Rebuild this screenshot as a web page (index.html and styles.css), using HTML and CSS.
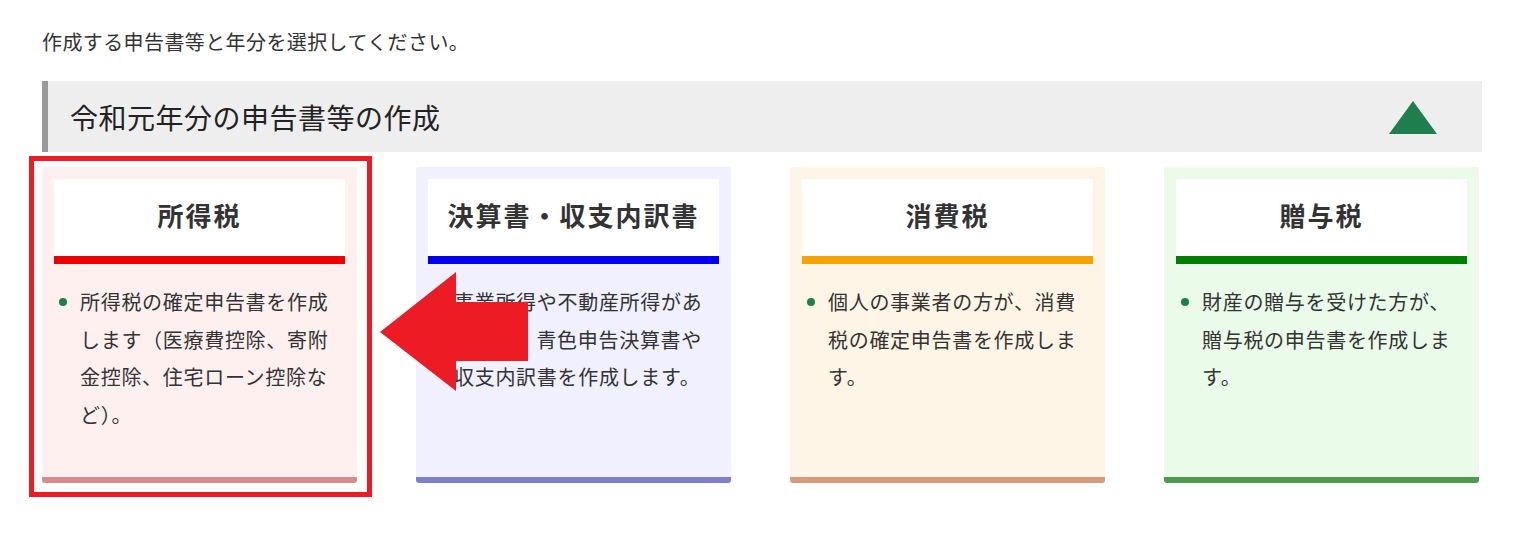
FILE: index.html
```html
<!DOCTYPE html>
<html lang="ja">
<head>
<meta charset="utf-8">
<title>申告書等の作成</title>
<link rel="stylesheet" href="styles.css">
</head>
<body>
<div class="page">
  <p class="intro">作成する申告書等と年分を選択してください。</p>
  <div class="band">
    <h2 class="band-title">令和元年分の申告書等の作成</h2>
    <svg class="band-toggle" width="48" height="33" viewBox="0 0 48 33"><polygon points="24,0 48,33 0,33" fill="#1e7e4e"/></svg>
  </div>
  <div class="cards-wrap">
    <div class="cards">
      <div class="card card-income">
        <div class="card-head"><h3>所得税</h3></div>
        <ul class="card-body"><li>所得税の確定申告書を作成します（医療費控除、寄附金控除、住宅ローン控除など）。</li></ul>
      </div>
      <div class="card card-settle">
        <div class="card-head"><h3>決算書・収支内訳書</h3></div>
        <ul class="card-body"><li>事業所得や不動産所得がある方が、青色申告決算書や収支内訳書を作成します。</li></ul>
      </div>
      <div class="card card-consume">
        <div class="card-head"><h3>消費税</h3></div>
        <ul class="card-body"><li>個人の事業者の方が、消費税の確定申告書を作成します。</li></ul>
      </div>
      <div class="card card-gift">
        <div class="card-head"><h3>贈与税</h3></div>
        <ul class="card-body"><li>財産の贈与を受けた方が、贈与税の申告書を作成します。</li></ul>
      </div>
    </div>
    <div class="highlight"></div>
    <svg class="arrow" width="148" height="119" viewBox="0 0 148 119"><polygon points="0,60 76,0 76,30 148,30 148,89 76,89 76,119" fill="#ed1c24"/></svg>
  </div>
</div>
</body>
</html>
```

FILE: styles.css
```css
* { box-sizing: border-box; }
html, body { margin: 0; padding: 0; background: #fff; }
body {
  min-height: 537px;
  font-family: "Noto Sans CJK JP", "Noto Sans", sans-serif;
  color: #333;
}
.page {
  width: 1524px;
  min-height: 537px;
  padding: 27px 42px 40px 42px;
}
.intro {
  margin: 0;
  font-size: 20px;
  line-height: 30px;
  letter-spacing: 0.4px;
  color: #333;
}
.band {
  margin-top: 24px;
  width: 1440px;
  height: 71px;
  background: #eeeeee;
  border-left: 6px solid #999999;
  display: flex;
  align-items: center;
  justify-content: space-between;
  padding: 0 45px 0 22px;
}
.band-title {
  margin: 0;
  font-size: 28px;
  font-weight: 400;
  line-height: 40px;
  letter-spacing: 0.5px;
  color: #222;
}
.band-toggle { display: block; margin-top: 2px; }
.cards-wrap {
  position: relative;
  margin-top: 15px;
  padding-bottom: 20px;
}
.cards {
  display: grid;
  grid-template-columns: repeat(4, 315px);
  column-gap: 59px;
}
.card {
  height: 316px;
  padding: 12px 12px 0 12px;
  border-radius: 3px;
  border-bottom: 6px solid;
}
.card-head {
  height: 85px;
  background: #fff;
  border-bottom: 8px solid;
  display: flex;
  align-items: center;
  justify-content: center;
  padding-bottom: 5px;
}
.card-head h3 {
  margin: 0;
  font-size: 26px;
  font-weight: 700;
  letter-spacing: 2px;
  line-height: 36px;
  color: #333;
}
.card-body {
  list-style: none;
  margin: 0;
  padding: 19px 0 0 26px;
}
.card-body li {
  position: relative;
  font-size: 20px;
  line-height: 37.5px;
  letter-spacing: 0.7px;
  color: #333;
}
.card-body li::before {
  content: "";
  position: absolute;
  left: -21px;
  top: 15px;
  width: 8px;
  height: 8px;
  border-radius: 50%;
  background: #1e7e4e;
}
.card-income { background: #fff0f0; border-bottom-color: #d98a8c; }
.card-income .card-head { border-bottom-color: #ee0000; }
.card-settle { background: #f0f0ff; border-bottom-color: #7f7fcc; }
.card-settle .card-head { border-bottom-color: #0000ee; }
.card-consume { background: #fff5e6; border-bottom-color: #d99a7c; }
.card-consume .card-head { border-bottom-color: #f5a300; }
.card-gift { background: #eafbea; border-bottom-color: #4f9a4f; }
.card-gift .card-head { border-bottom-color: #007f00; }
.highlight {
  position: absolute;
  left: -13px;
  top: -11px;
  width: 343px;
  height: 341px;
  border: 5px solid #ed1c24;
  pointer-events: none;
}
.arrow {
  position: absolute;
  left: 338px;
  top: 105px;
  display: block;
}
```
